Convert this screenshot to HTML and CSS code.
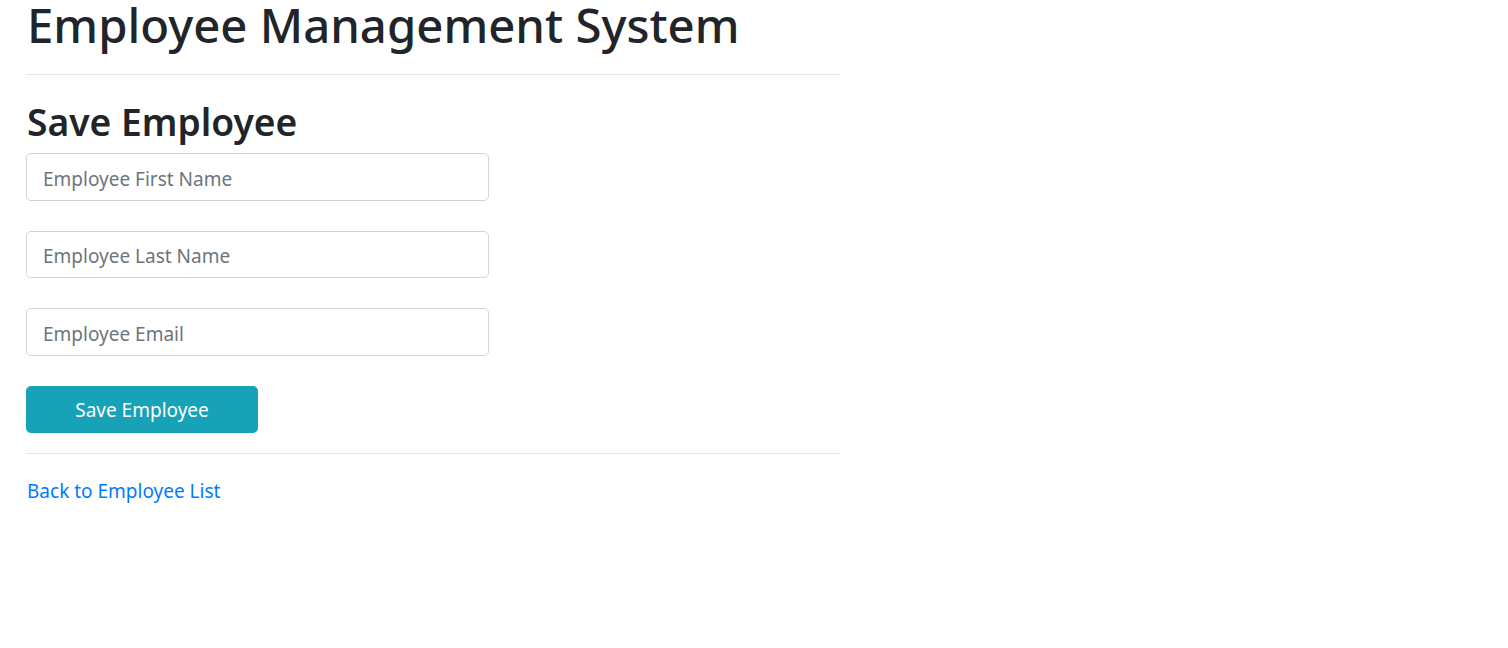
FILE: index.html
```html
<!DOCTYPE html>
<html lang="en">
<head>
<meta charset="utf-8">
<title>Employee Management System</title>
<link rel="stylesheet" href="styles.css">
</head>
<body>
<div class="container">
  <h1 class="title">Employee Management System</h1>
  <hr class="rule">
  <h2 class="subtitle">Save Employee</h2>
  <form class="form">
    <input class="field" type="text" placeholder="Employee First Name">
    <input class="field" type="text" placeholder="Employee Last Name">
    <input class="field" type="email" placeholder="Employee Email">
    <button class="btn" type="button">Save Employee</button>
  </form>
  <hr class="rule rule-bottom">
  <a class="back" href="#">Back to Employee List</a>
</div>
</body>
</html>
```
FILE: styles.css
```css
html, body {
  margin: 0;
  padding: 0;
  background: #fff;
}
body {
  font-family: "Noto Sans", "Open Sans", sans-serif;
  color: #212529;
}
.container {
  width: 815px;
  padding-left: 26px;
  display: flex;
  flex-direction: column;
  align-items: flex-start;
}
.title {
  margin: 0;
  padding-left: 1px;
  font-size: 47.3px;
  font-weight: 500;
  line-height: 50px;
}
.rule {
  align-self: stretch;
  margin: 24px 0 0 0;
  border: 0;
  border-top: 1px solid rgba(0, 0, 0, 0.1);
  height: 0;
}
.subtitle {
  margin: 23px 0 7px 0;
  padding-left: 1px;
  font-size: 37.2px;
  font-weight: 600;
  line-height: 48px;
}
.form {
  display: flex;
  flex-direction: column;
  gap: 30px;
  align-items: flex-start;
}
.field {
  box-sizing: border-box;
  width: 463px;
  height: 47.5px;
  padding: 10px 16px 6px;
  font-family: inherit;
  font-size: 19px;
  color: #495057;
  background: #fff;
  border: 1px solid #ced4da;
  border-radius: 4.8px;
  outline: none;
}
.field::placeholder {
  color: #6c757d;
  opacity: 1;
}
.btn {
  box-sizing: border-box;
  width: 232px;
  height: 47px;
  padding: 9px 16px 7px;
  font-family: inherit;
  font-size: 19px;
  color: #fff;
  background: #17a2b8;
  border: 1px solid #17a2b8;
  border-radius: 4.8px;
}
.rule-bottom {
  margin-top: 20px;
}
.back {
  margin-top: 22px;
  padding-left: 1px;
  font-size: 19px;
  line-height: 30px;
  color: #007bff;
  text-decoration: none;
}
```
